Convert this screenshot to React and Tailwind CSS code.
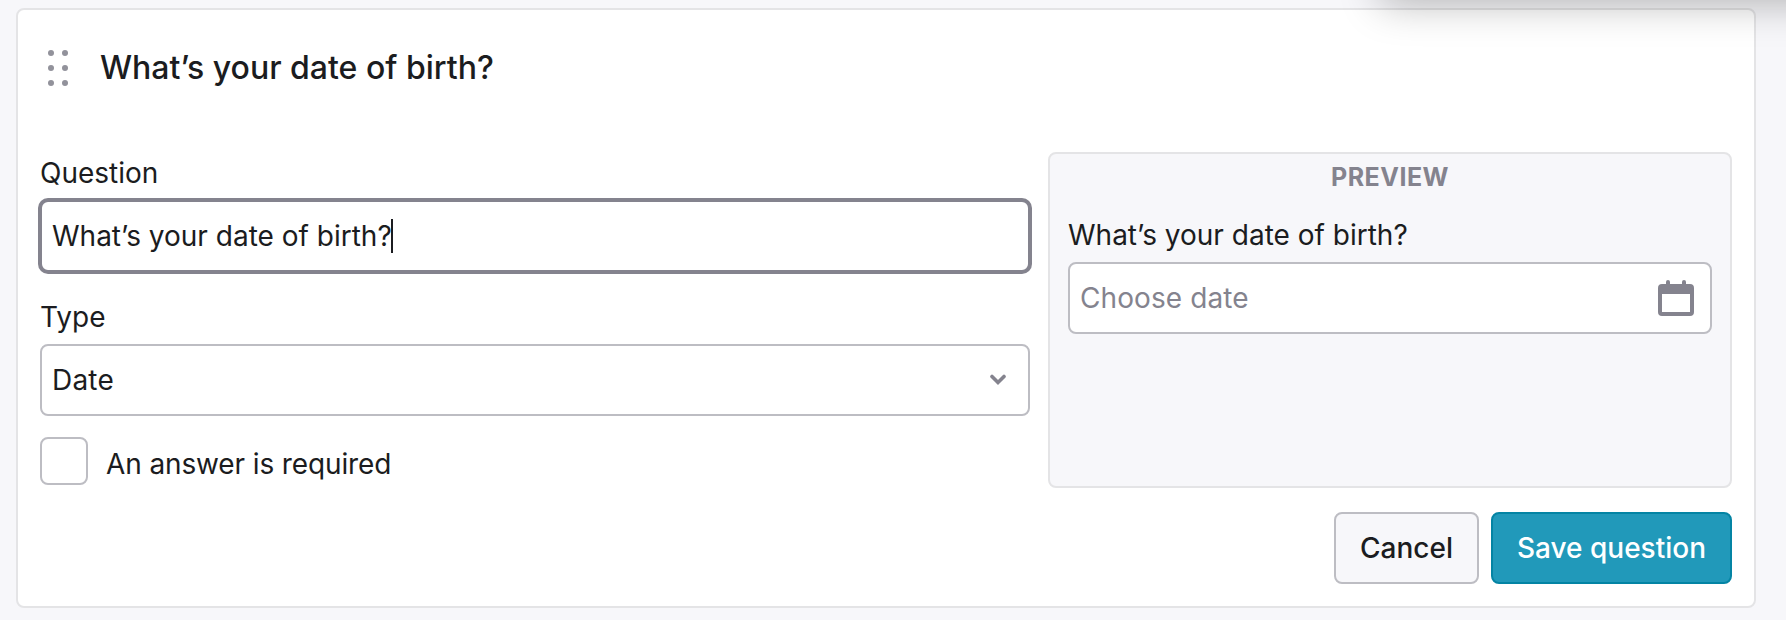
import { useState } from 'react'

function DragHandle() {
  return (
    <svg width="20" height="36" viewBox="0 0 20 36" className="shrink-0 fill-[#92929b]">
      {[3, 18, 33].map((cy) => (
        <g key={cy}>
          <circle cx="3" cy={cy} r="3" />
          <circle cx="17" cy={cy} r="3" />
        </g>
      ))}
    </svg>
  )
}

function CalendarIcon() {
  return (
    <svg width="36" height="36" viewBox="0 0 36 36" className="shrink-0 fill-[#84838e]">
      <rect x="8" y="0" width="4" height="8" rx="2" />
      <rect x="24" y="0" width="4" height="8" rx="2" />
      <path fillRule="evenodd" d="M4 4h28a4 4 0 0 1 4 4v24a4 4 0 0 1-4 4H4a4 4 0 0 1-4-4V8a4 4 0 0 1 4-4ZM4 14v18h28V14Z" />
    </svg>
  )
}

function ChevronIcon() {
  return (
    <svg width="16" height="12" viewBox="0 0 16 12" fill="none" className="shrink-0 stroke-[#84838e]">
      <path d="M2 2.5L8 8.5L14 2.5" strokeWidth="3.6" strokeLinecap="round" />
    </svg>
  )
}

function App() {
  const [question] = useState('What’s your date of birth?')
  const [required, setRequired] = useState(false)

  return (
    <div className="relative h-[620px] overflow-hidden bg-[#f7f7fa] px-4 pt-2 font-['Inter',sans-serif] text-[28px] leading-[34px] text-[#1b1c20]">
      <section className="h-[600px] w-[1740px] rounded-lg border-2 border-[#e4e4e6] bg-white px-[22px]">
        <header className="flex h-[142px] items-start pt-10 pl-2">
          <DragHandle />
          <h2 className="ml-[32px] text-[32px] leading-[36px] font-medium">{question}</h2>
        </header>

        <div className="flex gap-[18px]">
          <div className="w-[990px]">
            <label className="block pt-1">Question</label>
            <div className="mt-[10px] flex h-[72px] items-center rounded-lg border-2 border-[#84838e] bg-white px-[10px] ring-2 ring-[#84838e]">
              <span>{question}</span>
              <span className="-ml-px h-[34px] w-[2px] bg-[#1b1c20]" />
            </div>
            <label className="mt-[28px] block">Type</label>
            <div className="mt-[10px] flex h-[72px] items-center justify-between rounded-lg border-2 border-[#bdbdc3] bg-white pr-[22px] pl-[10px]">
              <span className="tracking-[0.2px]">Date</span>
              <ChevronIcon />
            </div>
            <label className="mt-[21px] flex items-center">
              <input type="checkbox" checked={required} onChange={(e) => setRequired(e.target.checked)} className="size-12 appearance-none rounded-lg border-2 border-[#bdbdc3] bg-white" />
              <span className="mt-[5px] ml-[18px] tracking-[-0.12px]">An answer is required</span>
            </label>
          </div>

          <aside className="h-[336px] w-[684px] rounded-lg border-2 border-[#e4e4e6] bg-[#f7f7fa] px-[18px]">
            <p className="pt-2 text-center text-[25px] leading-[30px] font-bold tracking-[0.5px] text-[#84838e]">PREVIEW</p>
            <p className="mt-[26px]">{question}</p>
            <div className="mt-[10px] flex h-[72px] items-center justify-between rounded-lg border-2 border-[#bdbdc3] bg-white pr-4 pl-[10px] text-[#84838e]">
              <span className="tracking-[0.1px]">Choose date</span>
              <CalendarIcon />
            </div>
          </aside>
        </div>

        <footer className="mt-6 flex justify-end gap-3 font-medium">
          <button type="button" className="h-[72px] w-[145px] rounded-lg border-2 border-[#bdbdc3] bg-[#f7f7fa]">Cancel</button>
          <button type="button" className="h-[72px] w-[241px] rounded-lg border-2 border-[#0484a4] bg-[#2199ba] text-white">Save question</button>
        </footer>
      </section>

      {/* panel above the viewport, only its shadow is visible */}
      <div className="absolute -top-[60px] left-[1380px] h-[56px] w-[500px] rounded-lg shadow-[0_8px_40px_rgba(0,0,0,0.28)]" />
    </div>
  )
}

export default App
